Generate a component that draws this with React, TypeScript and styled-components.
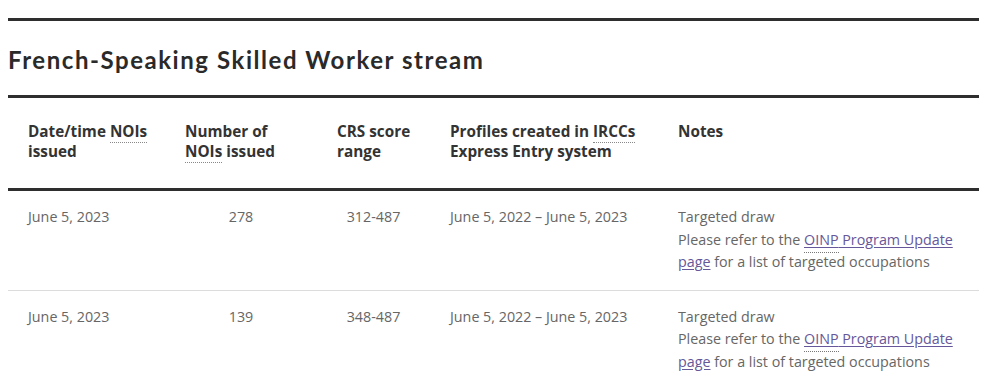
import React from 'react'
import styled, { createGlobalStyle } from 'styled-components'

const GlobalStyle = createGlobalStyle`
  body {
    margin: 0;
    background: #fff;
    font-family: 'Open Sans', 'Noto Sans', sans-serif;
  }
`

interface Draw {
  date: string
  count: number
  range: string
  profiles: string
}

const draws: Draw[] = [
  { date: 'June 5, 2023', count: 278, range: '312-487', profiles: 'June 5, 2022 – June 5, 2023' },
  { date: 'June 5, 2023', count: 139, range: '348-487', profiles: 'June 5, 2022 – June 5, 2023' },
]

const Page = styled.div`
  padding: 18px 27px 0 8px;
`

const Section = styled.section`
  border-top: 3px solid #2e2e2e;
`

const Title = styled.h2`
  margin: 0;
  padding: 24px 0 20px;
  font-family: Lato, 'Noto Sans', sans-serif;
  font-weight: 700;
  font-size: 24px;
  letter-spacing: 1.55px;
  line-height: 30px;
  color: #2a2a2a;
`

const Table = styled.table`
  width: 100%;
  border-collapse: collapse;
  table-layout: fixed;
  border-top: 3px solid #2e2e2e;
`

const HeadCell = styled.th`
  padding: 23px 12px 27px 20px;
  text-align: left;
  vertical-align: top;
  font-size: 15.3px;
  line-height: 20px;
  font-weight: 700;
  color: #333;
  border-bottom: 3px solid #2e2e2e;
`

const Row = styled.tr`
  & + & td {
    border-top: 1px solid #dcdcdc;
  }
`

const Cell = styled.td<{ $center?: boolean; $notes?: boolean }>`
  padding: 15px ${({ $notes }) => ($notes ? '10px' : '20px')} 16px 20px;
  vertical-align: top;
  text-align: ${({ $center }) => ($center ? 'center' : 'left')};
  font-size: 14.3px;
  line-height: 22.5px;
  color: #666;
`

const Abbr = styled.abbr`
  text-decoration: none;
  border-bottom: 1px dotted #888;
  padding-bottom: 1px;
`

const Link = styled.a`
  color: #65579a;
  text-decoration: underline;
  text-underline-offset: 2px;
`

const LinkAbbr = styled.span`
  border-bottom: 1px dotted #777;
  padding-bottom: 3px;
`

const App: React.FC = () => {
  return (
    <Page>
      <GlobalStyle />
      <Section>
        <Title>French-Speaking Skilled Worker stream</Title>
        <Table>
          <colgroup>
            <col style={{ width: 157 }} />
            <col style={{ width: 152 }} />
            <col style={{ width: 113 }} />
            <col style={{ width: 228 }} />
            <col />
          </colgroup>
          <thead>
            <tr>
              <HeadCell>
                Date/time <Abbr title="Notifications of Interest">NOIs</Abbr> issued
              </HeadCell>
              <HeadCell>
                Number of <Abbr title="Notifications of Interest">NOIs</Abbr> issued
              </HeadCell>
              <HeadCell>CRS score range</HeadCell>
              <HeadCell>
                Profiles created in <Abbr title="Immigration, Refugees and Citizenship Canada">IRCCs</Abbr> Express Entry system
              </HeadCell>
              <HeadCell>Notes</HeadCell>
            </tr>
          </thead>
          <tbody>
            {draws.map((d, i) => (
              <Row key={i}>
                <Cell>{d.date}</Cell>
                <Cell $center>{d.count}</Cell>
                <Cell $center>{d.range}</Cell>
                <Cell>{d.profiles}</Cell>
                <Cell $notes>
                  Targeted draw
                  <br />
                  Please refer to the{' '}
                  <Link href="#">
                    <LinkAbbr>OINP</LinkAbbr> Program Update page
                  </Link>{' '}
                  for a list of targeted occupations
                </Cell>
              </Row>
            ))}
          </tbody>
        </Table>
      </Section>
    </Page>
  )
}

export default App
